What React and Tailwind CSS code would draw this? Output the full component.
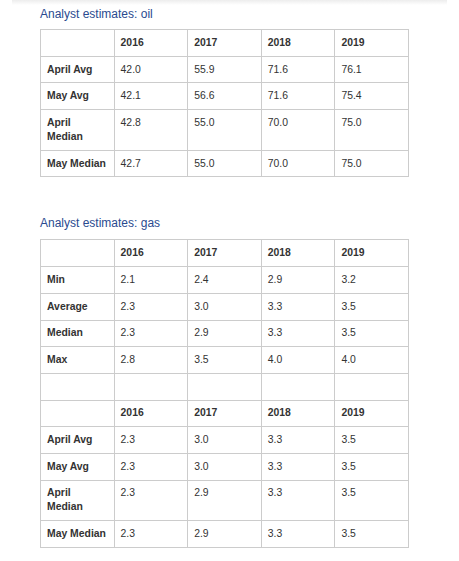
import React from 'react';

const oilRows = [
  ['April Avg', '42.0', '55.9', '71.6', '76.1'],
  ['May Avg', '42.1', '56.6', '71.6', '75.4'],
  ['April|Median', '42.8', '55.0', '70.0', '75.0'],
  ['May Median', '42.7', '55.0', '70.0', '75.0'],
];

const gasRows = [
  ['Min', '2.1', '2.4', '2.9', '3.2'],
  ['Average', '2.3', '3.0', '3.3', '3.5'],
  ['Median', '2.3', '2.9', '3.3', '3.5'],
  ['Max', '2.8', '3.5', '4.0', '4.0'],
];

const gasMonthRows = [
  ['April Avg', '2.3', '3.0', '3.3', '3.5'],
  ['May Avg', '2.3', '3.0', '3.3', '3.5'],
  ['April|Median', '2.3', '2.9', '3.3', '3.5'],
  ['May Median', '2.3', '2.9', '3.3', '3.5'],
];

const years = ['2016', '2017', '2018', '2019'];

const cell = 'border border-[#cccccc] px-[6px] py-[5.85px] text-left align-top leading-[14px]';

const HeaderRow = () => (
  <tr>
    <td className={cell}>&nbsp;</td>
    {years.map((y) => (
      <td key={y} className={`${cell} font-bold`}>{y}</td>
    ))}
  </tr>
);

// label column: "|" marks where the cell wraps in the original
const DataRow = ({ row }) => {
  const parts = row[0].split('|');
  return (
    <tr>
      <td className={`${cell} font-bold whitespace-nowrap`}>
        {parts.map((p, i) => (
          <React.Fragment key={i}>
            {i > 0 && <br />}
            {p}
          </React.Fragment>
        ))}
      </td>
      {row.slice(1).map((v, i) => (
        <td key={i} className={cell}>{v}</td>
      ))}
    </tr>
  );
};

const App = () => {
  return (
    <div
      className="w-[459px] min-h-[561px] bg-white text-[#333333]"
      style={{ fontFamily: '"Liberation Sans", Arial, sans-serif' }}
    >
      {/* faint shadow from the bar above */}
      <div className="h-[5px] mx-[12px] bg-gradient-to-b from-[#ededed] to-white"></div>

      <div className="pl-[40px]">
        <h2 className="text-[12px] leading-[14px] text-[#2a4a8f] pt-[2px] mb-[8px]">
          Analyst estimates: oil
        </h2>
        <table className="w-[369px] table-fixed border-collapse text-[10.4px]">
          <tbody>
            <HeaderRow />
            {oilRows.map((r) => (
              <DataRow key={r[0]} row={r} />
            ))}
          </tbody>
        </table>

        <h2 className="text-[12px] leading-[14px] text-[#2a4a8f] mt-[39px] mb-[9px]">
          Analyst estimates: gas
        </h2>
        <table className="w-[369px] table-fixed border-collapse text-[10.4px]">
          <tbody>
            <HeaderRow />
            {gasRows.map((r) => (
              <DataRow key={r[0]} row={r} />
            ))}
            <tr>
              {[0, 1, 2, 3, 4].map((i) => (
                <td key={i} className={cell}>&nbsp;</td>
              ))}
            </tr>
            <HeaderRow />
            {gasMonthRows.map((r) => (
              <DataRow key={r[0]} row={r} />
            ))}
          </tbody>
        </table>
      </div>
    </div>
  );
};

export default App;
